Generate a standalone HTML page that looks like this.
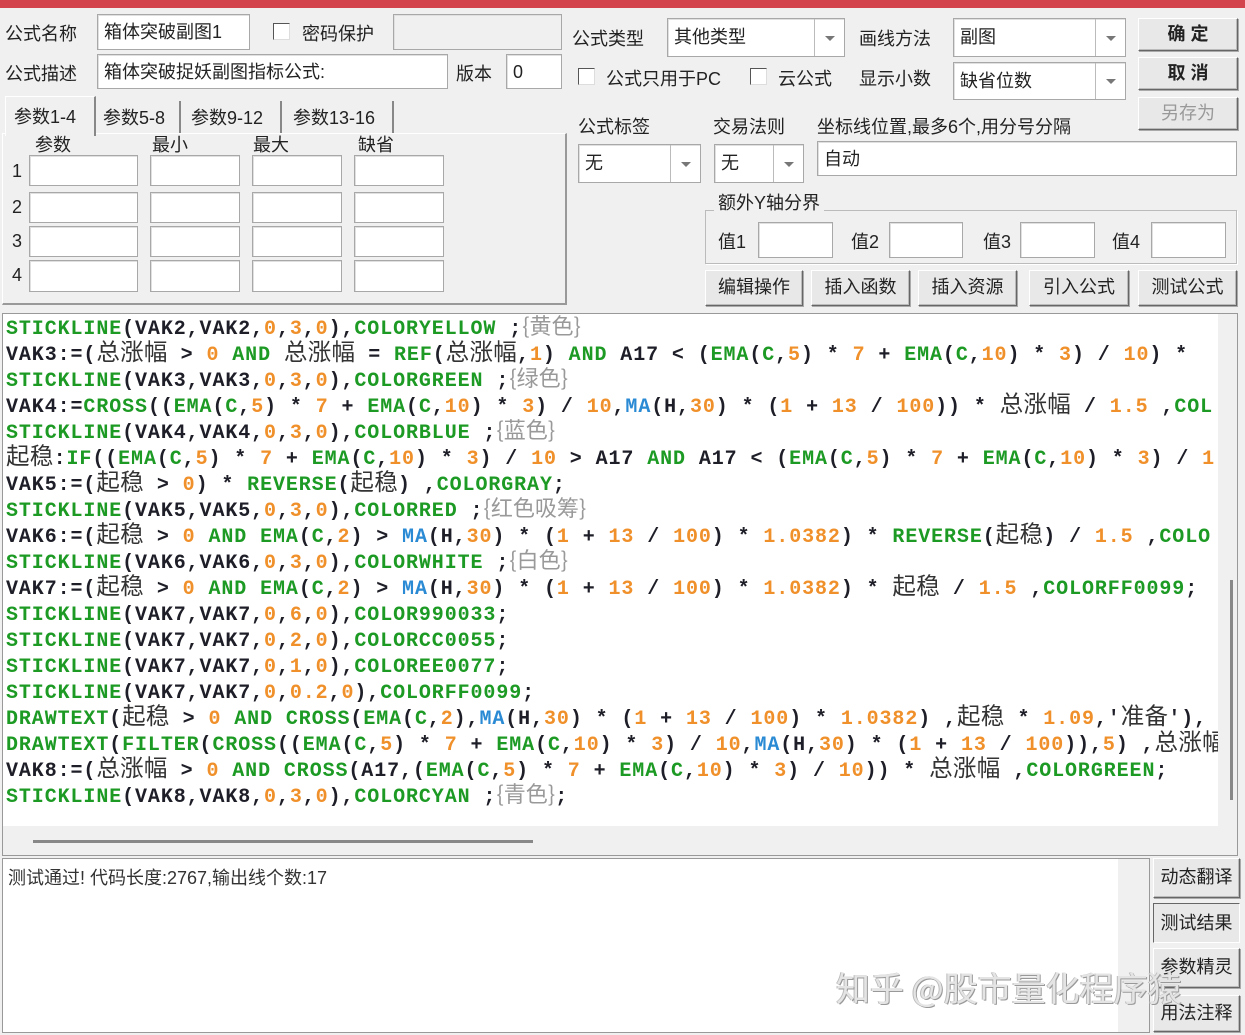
<!DOCTYPE html>
<html><head><meta charset="utf-8"><style>
*{box-sizing:border-box;margin:0;padding:0}
body{width:1245px;height:1035px;background:#f0f0f0;position:relative;overflow:hidden;font-family:"Liberation Sans","Noto Sans CJK SC",sans-serif;font-size:18px;color:#222}
.a{position:absolute;white-space:nowrap}
.inp{position:absolute;background:#fff;border:1px solid #a8a8a8;box-shadow:inset 1px 1px 0 #e0e0e0;padding:2px 6px;line-height:30px;font-size:18px}
.cb{position:absolute;width:17px;height:17px;background:#fff;border:1px solid #555;border-right-color:#ddd;border-bottom-color:#ddd}
.dd{position:absolute;top:0;bottom:0;right:0;width:30px;border-left:1px solid #bbb}
.dd:after{content:"";position:absolute;left:10px;top:50%;margin-top:-2px;border:5px solid transparent;border-top:5px solid #777;border-bottom:0}
.btn{position:absolute;background:#e8e8e8;border:1px solid #fff;border-right-color:#666;border-bottom-color:#666;box-shadow:1px 1px 0 #aaa,inset -1px -1px 0 #bbb;text-align:center;font-size:18px}
.code{position:absolute;left:2px;top:313px;width:1236px;height:543px;background:#fff;border:1px solid #999;overflow:hidden}
.ln{position:absolute;left:3px;margin-top:3px;font-family:"Liberation Mono",monospace;font-weight:bold;font-size:20px;letter-spacing:0.9px;color:#1e1e28;white-space:nowrap;line-height:26px;height:26px}
.g{color:#1c9a24}.o{color:#f0902a}.b{color:#2a8ad4}
.c{font-family:"Noto Sans CJK SC",sans-serif;font-weight:normal;font-size:23.5px;letter-spacing:0.3px;color:#333;line-height:0}
.m{font-family:"Noto Sans CJK SC",sans-serif;font-weight:normal;font-size:22px;letter-spacing:0;color:#999;line-height:0}
</style></head><body>
<div class="a" style="left:0;top:0;width:1245px;height:8px;background:#d2434c"></div>

<div class="a" style="left:5px;top:20px">公式名称</div>
<div class="inp" style="left:97px;top:14px;width:153px;height:36px">箱体突破副图1</div>
<div class="cb" style="left:273px;top:23px"></div>
<div class="a" style="left:302px;top:20px">密码保护</div>
<div class="inp" style="left:393px;top:14px;width:169px;height:36px;background:#f0f0f0"></div>
<div class="a" style="left:5px;top:60px">公式描述</div>
<div class="inp" style="left:97px;top:54px;width:351px;height:35px">箱体突破捉妖副图指标公式:</div>
<div class="a" style="left:456px;top:60px">版本</div>
<div class="inp" style="left:506px;top:54px;width:56px;height:35px">0</div>

<div class="a" style="left:2px;top:133px;width:565px;height:172px;border:1px solid #fff;border-right:2px solid #999;border-bottom:2px solid #999"></div>
<div class="a" style="left:5px;top:96px;width:91px;height:40px;background:#f0f0f0;border:1px solid #fff;border-right:2px solid #888;border-bottom:none;padding:6px 8px">参数1-4</div>
<div class="a" style="left:97px;top:101px;width:84px;height:32px;border-right:2px solid #888;padding:3px 6px">参数5-8</div>
<div class="a" style="left:183px;top:101px;width:99px;height:32px;border-right:2px solid #888;padding:3px 8px">参数9-12</div>
<div class="a" style="left:285px;top:101px;width:109px;height:32px;border-right:2px solid #888;padding:3px 8px">参数13-16</div>
<div class="a" style="left:35px;top:131px">参数</div>
<div class="a" style="left:152px;top:131px">最小</div>
<div class="a" style="left:253px;top:131px">最大</div>
<div class="a" style="left:358px;top:131px">缺省</div>
<div class="a" style="left:12px;top:161px">1</div>
<div class="a" style="left:12px;top:197px">2</div>
<div class="a" style="left:12px;top:231px">3</div>
<div class="a" style="left:12px;top:265px">4</div>
<div class="inp" style="left:29px;top:155px;width:109px;height:31px"></div><div class="inp" style="left:150px;top:155px;width:90px;height:31px"></div><div class="inp" style="left:252px;top:155px;width:90px;height:31px"></div><div class="inp" style="left:354px;top:155px;width:90px;height:31px"></div>
<div class="inp" style="left:29px;top:192px;width:109px;height:31px"></div><div class="inp" style="left:150px;top:192px;width:90px;height:31px"></div><div class="inp" style="left:252px;top:192px;width:90px;height:31px"></div><div class="inp" style="left:354px;top:192px;width:90px;height:31px"></div>
<div class="inp" style="left:29px;top:226px;width:109px;height:31px"></div><div class="inp" style="left:150px;top:226px;width:90px;height:31px"></div><div class="inp" style="left:252px;top:226px;width:90px;height:31px"></div><div class="inp" style="left:354px;top:226px;width:90px;height:31px"></div>
<div class="inp" style="left:29px;top:260px;width:109px;height:32px"></div><div class="inp" style="left:150px;top:260px;width:90px;height:32px"></div><div class="inp" style="left:252px;top:260px;width:90px;height:32px"></div><div class="inp" style="left:354px;top:260px;width:90px;height:32px"></div>

<div class="a" style="left:572px;top:25px">公式类型</div>
<div class="inp" style="left:667px;top:18px;width:178px;height:39px;line-height:33px">其他类型<div class="dd"></div></div>
<div class="a" style="left:859px;top:25px">画线方法</div>
<div class="inp" style="left:953px;top:18px;width:173px;height:39px;line-height:33px">副图<div class="dd"></div></div>
<div class="btn" style="left:1138px;top:18px;width:100px;height:33px;line-height:30px;font-weight:bold">确 定</div>
<div class="cb" style="left:578px;top:68px"></div>
<div class="a" style="left:606px;top:65px">公式只用于PC</div>
<div class="cb" style="left:750px;top:68px"></div>
<div class="a" style="left:778px;top:65px">云公式</div>
<div class="a" style="left:859px;top:65px">显示小数</div>
<div class="inp" style="left:953px;top:62px;width:173px;height:38px;line-height:33px">缺省位数<div class="dd"></div></div>
<div class="btn" style="left:1138px;top:57px;width:100px;height:33px;line-height:30px;font-weight:bold">取 消</div>
<div class="btn" style="left:1138px;top:97px;width:100px;height:33px;line-height:30px;color:#999">另存为</div>

<div class="a" style="left:578px;top:113px">公式标签</div>
<div class="a" style="left:713px;top:113px">交易法则</div>
<div class="a" style="left:817px;top:113px">坐标线位置,最多6个,用分号分隔</div>
<div class="inp" style="left:578px;top:144px;width:123px;height:39px;line-height:33px">无<div class="dd"></div></div>
<div class="inp" style="left:714px;top:144px;width:90px;height:39px;line-height:33px">无<div class="dd"></div></div>
<div class="inp" style="left:817px;top:141px;width:420px;height:35px">自动</div>

<div class="a" style="left:705px;top:210px;width:532px;height:54px;border:1px solid #bbb;box-shadow:1px 1px 0 #fff"></div>
<div class="a" style="left:714px;top:189px;background:#f0f0f0;padding:0 4px">额外Y轴分界</div>
<div class="a" style="left:718px;top:228px">值1</div><div class="inp" style="left:758px;top:222px;width:75px;height:36px"></div>
<div class="a" style="left:851px;top:228px">值2</div><div class="inp" style="left:889px;top:222px;width:74px;height:36px"></div>
<div class="a" style="left:983px;top:228px">值3</div><div class="inp" style="left:1020px;top:222px;width:75px;height:36px"></div>
<div class="a" style="left:1112px;top:228px">值4</div><div class="inp" style="left:1151px;top:222px;width:75px;height:36px"></div>

<div class="btn" style="left:705px;top:270px;width:98px;height:36px;line-height:33px">编辑操作</div>
<div class="btn" style="left:811px;top:270px;width:99px;height:36px;line-height:33px">插入函数</div>
<div class="btn" style="left:918px;top:270px;width:99px;height:36px;line-height:33px">插入资源</div>
<div class="btn" style="left:1029px;top:270px;width:100px;height:36px;line-height:33px">引入公式</div>
<div class="btn" style="left:1138px;top:270px;width:99px;height:36px;line-height:33px">测试公式</div>

<div class="code">
<div class="ln" style="top:0"><span class="g">STICKLINE</span>(VAK2,VAK2,<span class="o">0</span>,<span class="o">3</span>,<span class="o">0</span>),<span class="g">COLORYELLOW</span> ;<span class="m">{黄色}</span></div>
<div class="ln" style="top:26px">VAK3:=(<span class="c">总涨幅</span> &gt; <span class="o">0</span> <span class="g">AND</span> <span class="c">总涨幅</span> = <span class="g">REF</span>(<span class="c">总涨幅</span>,<span class="o">1</span>) <span class="g">AND</span> A17 &lt; (<span class="g">EMA</span>(<span class="g">C</span>,<span class="o">5</span>) * <span class="o">7</span> + <span class="g">EMA</span>(<span class="g">C</span>,<span class="o">10</span>) * <span class="o">3</span>) / <span class="o">10</span>) *</div>
<div class="ln" style="top:52px"><span class="g">STICKLINE</span>(VAK3,VAK3,<span class="o">0</span>,<span class="o">3</span>,<span class="o">0</span>),<span class="g">COLORGREEN</span> ;<span class="m">{绿色}</span></div>
<div class="ln" style="top:78px">VAK4:=<span class="g">CROSS</span>((<span class="g">EMA</span>(<span class="g">C</span>,<span class="o">5</span>) * <span class="o">7</span> + <span class="g">EMA</span>(<span class="g">C</span>,<span class="o">10</span>) * <span class="o">3</span>) / <span class="o">10</span>,<span class="b">MA</span>(H,<span class="o">30</span>) * (<span class="o">1</span> + <span class="o">13</span> / <span class="o">100</span>)) * <span class="c">总涨幅</span> / <span class="o">1.5</span> ,<span class="g">COL</span></div>
<div class="ln" style="top:104px"><span class="g">STICKLINE</span>(VAK4,VAK4,<span class="o">0</span>,<span class="o">3</span>,<span class="o">0</span>),<span class="g">COLORBLUE</span> ;<span class="m">{蓝色}</span></div>
<div class="ln" style="top:130px"><span class="c">起稳</span>:<span class="g">IF</span>((<span class="g">EMA</span>(<span class="g">C</span>,<span class="o">5</span>) * <span class="o">7</span> + <span class="g">EMA</span>(<span class="g">C</span>,<span class="o">10</span>) * <span class="o">3</span>) / <span class="o">10</span> &gt; A17 <span class="g">AND</span> A17 &lt; (<span class="g">EMA</span>(<span class="g">C</span>,<span class="o">5</span>) * <span class="o">7</span> + <span class="g">EMA</span>(<span class="g">C</span>,<span class="o">10</span>) * <span class="o">3</span>) / <span class="o">1</span></div>
<div class="ln" style="top:156px">VAK5:=(<span class="c">起稳</span> &gt; <span class="o">0</span>) * <span class="g">REVERSE</span>(<span class="c">起稳</span>) ,<span class="g">COLORGRAY</span>;</div>
<div class="ln" style="top:182px"><span class="g">STICKLINE</span>(VAK5,VAK5,<span class="o">0</span>,<span class="o">3</span>,<span class="o">0</span>),<span class="g">COLORRED</span> ;<span class="m">{红色吸筹}</span></div>
<div class="ln" style="top:208px">VAK6:=(<span class="c">起稳</span> &gt; <span class="o">0</span> <span class="g">AND</span> <span class="g">EMA</span>(<span class="g">C</span>,<span class="o">2</span>) &gt; <span class="b">MA</span>(H,<span class="o">30</span>) * (<span class="o">1</span> + <span class="o">13</span> / <span class="o">100</span>) * <span class="o">1.0382</span>) * <span class="g">REVERSE</span>(<span class="c">起稳</span>) / <span class="o">1.5</span> ,<span class="g">COLO</span></div>
<div class="ln" style="top:234px"><span class="g">STICKLINE</span>(VAK6,VAK6,<span class="o">0</span>,<span class="o">3</span>,<span class="o">0</span>),<span class="g">COLORWHITE</span> ;<span class="m">{白色}</span></div>
<div class="ln" style="top:260px">VAK7:=(<span class="c">起稳</span> &gt; <span class="o">0</span> <span class="g">AND</span> <span class="g">EMA</span>(<span class="g">C</span>,<span class="o">2</span>) &gt; <span class="b">MA</span>(H,<span class="o">30</span>) * (<span class="o">1</span> + <span class="o">13</span> / <span class="o">100</span>) * <span class="o">1.0382</span>) * <span class="c">起稳</span> / <span class="o">1.5</span> ,<span class="g">COLORFF0099</span>;</div>
<div class="ln" style="top:286px"><span class="g">STICKLINE</span>(VAK7,VAK7,<span class="o">0</span>,<span class="o">6</span>,<span class="o">0</span>),<span class="g">COLOR990033</span>;</div>
<div class="ln" style="top:312px"><span class="g">STICKLINE</span>(VAK7,VAK7,<span class="o">0</span>,<span class="o">2</span>,<span class="o">0</span>),<span class="g">COLORCC0055</span>;</div>
<div class="ln" style="top:338px"><span class="g">STICKLINE</span>(VAK7,VAK7,<span class="o">0</span>,<span class="o">1</span>,<span class="o">0</span>),<span class="g">COLOREE0077</span>;</div>
<div class="ln" style="top:364px"><span class="g">STICKLINE</span>(VAK7,VAK7,<span class="o">0</span>,<span class="o">0.2</span>,<span class="o">0</span>),<span class="g">COLORFF0099</span>;</div>
<div class="ln" style="top:390px"><span class="g">DRAWTEXT</span>(<span class="c">起稳</span> &gt; <span class="o">0</span> <span class="g">AND</span> <span class="g">CROSS</span>(<span class="g">EMA</span>(<span class="g">C</span>,<span class="o">2</span>),<span class="b">MA</span>(H,<span class="o">30</span>) * (<span class="o">1</span> + <span class="o">13</span> / <span class="o">100</span>) * <span class="o">1.0382</span>) ,<span class="c">起稳</span> * <span class="o">1.09</span>,'<span class="c">准备</span>'),</div>
<div class="ln" style="top:416px"><span class="g">DRAWTEXT</span>(<span class="g">FILTER</span>(<span class="g">CROSS</span>((<span class="g">EMA</span>(<span class="g">C</span>,<span class="o">5</span>) * <span class="o">7</span> + <span class="g">EMA</span>(<span class="g">C</span>,<span class="o">10</span>) * <span class="o">3</span>) / <span class="o">10</span>,<span class="b">MA</span>(H,<span class="o">30</span>) * (<span class="o">1</span> + <span class="o">13</span> / <span class="o">100</span>)),<span class="o">5</span>) ,<span class="c">总涨幅</span></div>
<div class="ln" style="top:442px">VAK8:=(<span class="c">总涨幅</span> &gt; <span class="o">0</span> <span class="g">AND</span> <span class="g">CROSS</span>(A17,(<span class="g">EMA</span>(<span class="g">C</span>,<span class="o">5</span>) * <span class="o">7</span> + <span class="g">EMA</span>(<span class="g">C</span>,<span class="o">10</span>) * <span class="o">3</span>) / <span class="o">10</span>)) * <span class="c">总涨幅</span> ,<span class="g">COLORGREEN</span>;</div>
<div class="ln" style="top:468px"><span class="g">STICKLINE</span>(VAK8,VAK8,<span class="o">0</span>,<span class="o">3</span>,<span class="o">0</span>),<span class="g">COLORCYAN</span> ;<span class="m">{青色}</span>;</div>
<div class="a" style="left:1215px;top:0;width:21px;height:543px;background:#f0f0f0"></div>
<div class="a" style="left:1227px;top:266px;width:3px;height:220px;background:#888"></div>
<div class="a" style="left:0;top:512px;width:1236px;height:31px;background:#f0f0f0"></div>
<div class="a" style="left:30px;top:526px;width:500px;height:3px;background:#888"></div>
</div>

<div class="a" style="left:2px;top:858px;width:1148px;height:175px;background:#f0f0f0;border:1px solid #999"></div>
<div class="a" style="left:3px;top:859px;width:1115px;height:173px;background:#fff"></div>
<div class="a" style="left:8px;top:864px;font-size:18px;color:#333">测试通过! 代码长度:2767,输出线个数:17</div>
<div class="btn" style="left:1153px;top:858px;width:87px;height:40px;line-height:36px">动态翻译</div>
<div class="btn" style="left:1153px;top:903px;width:87px;height:40px;line-height:38px;border-color:#666 #fff #fff #666;box-shadow:none">测试结果</div>
<div class="btn" style="left:1153px;top:948px;width:87px;height:40px;line-height:36px">参数精灵</div>
<div class="btn" style="left:1153px;top:995px;width:87px;height:37px;line-height:34px">用法注释</div>
<div class="a" style="left:836px;top:962px;font-family:'Noto Sans CJK SC',sans-serif;font-size:34px;color:#e4e4e4;text-shadow:1px 1px 0 #999,-1px 0 0 #bbb">知乎 @股市量化程序猿</div>
</body></html>
